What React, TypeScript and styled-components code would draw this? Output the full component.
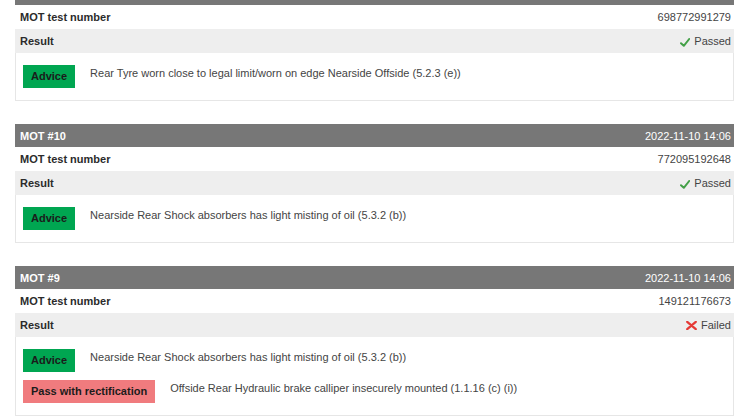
import React from "react";
import styled, { createGlobalStyle } from "styled-components";

const GlobalStyle = createGlobalStyle`
  html, body {
    margin: 0;
    padding: 0;
    background: #ffffff;
  }
  body {
    font-family: "Liberation Sans", Arial, sans-serif;
    font-size: 11px;
    color: #333333;
    overflow: hidden;
  }
`;

type Outcome = "passed" | "failed";
type Kind = "advice" | "rectification";

interface Defect {
  kind: Kind;
  text: string;
}

interface MotTest {
  id: number;
  date: string;
  testNumber: string;
  outcome: Outcome;
  defects: Defect[];
}

const tests: MotTest[] = [
  {
    id: 11,
    date: "2022-11-10 14:06",
    testNumber: "698772991279",
    outcome: "passed",
    defects: [
      {
        kind: "advice",
        text: "Rear Tyre worn close to legal limit/worn on edge Nearside Offside (5.2.3 (e))",
      },
    ],
  },
  {
    id: 10,
    date: "2022-11-10 14:06",
    testNumber: "772095192648",
    outcome: "passed",
    defects: [
      {
        kind: "advice",
        text: "Nearside Rear Shock absorbers has light misting of oil (5.3.2 (b))",
      },
    ],
  },
  {
    id: 9,
    date: "2022-11-10 14:06",
    testNumber: "149121176673",
    outcome: "failed",
    defects: [
      {
        kind: "advice",
        text: "Nearside Rear Shock absorbers has light misting of oil (5.3.2 (b))",
      },
      {
        kind: "rectification",
        text: "Offside Rear Hydraulic brake calliper insecurely mounted (1.1.16 (c) (i))",
      },
    ],
  },
];

/* The list is scrolled a little: the first card's header sits above the fold. */
const Page = styled.main`
  padding: 0 16px 0 15px;
  margin-top: -18px;
  display: flex;
  flex-direction: column;
  gap: 23px;
`;

const Card = styled.section`
  display: flex;
  flex-direction: column;
`;

const CardHeader = styled.header`
  display: flex;
  align-items: center;
  justify-content: space-between;
  height: 23px;
  padding: 0 3px 0 5px;
  background: #777777;
  color: #ffffff;
`;

const Title = styled.span`
  font-weight: bold;
`;

const Row = styled.div<{ $shaded?: boolean }>`
  display: flex;
  align-items: center;
  justify-content: space-between;
  height: 24px;
  padding: 0 3px 0 5px;
  background: ${(p) => (p.$shaded ? "#eeeeee" : "#ffffff")};
`;

const Label = styled.span`
  font-weight: bold;
  color: #2b2b2b;
`;

const Value = styled.span`
  color: #444444;
  display: inline-flex;
  align-items: center;
  gap: 4px;
`;

const Body = styled.div`
  display: flex;
  flex-direction: column;
  gap: 8px;
  padding: 12px 7px;
  border: 1px solid #e6e6e6;
  border-top: none;
`;

const DefectRow = styled.div`
  display: flex;
  align-items: flex-start;
  gap: 15px;
`;

const Badge = styled.span<{ $kind: Kind }>`
  flex: none;
  height: 23px;
  line-height: 23px;
  padding: 0 8px;
  font-weight: bold;
  color: #1b1b1b;
  background: ${(p) => (p.$kind === "advice" ? "#00a651" : "#f07b7e")};
`;

const DefectText = styled.span`
  padding-top: 2px;
  line-height: 13px;
  color: #444444;
`;

const CheckIcon = () => (
  <svg width="10" height="9" viewBox="0 0 10 9" style={{ marginTop: 3 }}>
    <path d="M1 5.2 L3.8 7.8 L9.2 1" fill="none" stroke="#43a047" strokeWidth="2" strokeLinecap="round" strokeLinejoin="round" />
  </svg>
);

const CrossIcon = () => (
  <svg width="11" height="9" viewBox="0 0 11 9">
    <path d="M1.2 0.8 L9.8 8.2 M9.8 0.8 L1.2 8.2" fill="none" stroke="#e53935" strokeWidth="2.2" strokeLinecap="round" />
  </svg>
);

const labels: Record<Kind, string> = {
  advice: "Advice",
  rectification: "Pass with rectification",
};

const TestCard = ({ test }: { test: MotTest }) => (
  <Card>
    <CardHeader>
      <Title>MOT #{test.id}</Title>
      <span>{test.date}</span>
    </CardHeader>
    <Row>
      <Label>MOT test number</Label>
      <Value>{test.testNumber}</Value>
    </Row>
    <Row $shaded>
      <Label>Result</Label>
      <Value>
        {test.outcome === "passed" ? <CheckIcon /> : <CrossIcon />}
        {test.outcome === "passed" ? "Passed" : "Failed"}
      </Value>
    </Row>
    <Body>
      {test.defects.map((d, i) => (
        <DefectRow key={i}>
          <Badge $kind={d.kind}>{labels[d.kind]}</Badge>
          <DefectText>{d.text}</DefectText>
        </DefectRow>
      ))}
    </Body>
  </Card>
);

export default function App() {
  return (
    <>
      <GlobalStyle />
      <Page>
        {tests.map((t) => (
          <TestCard key={t.id} test={t} />
        ))}
      </Page>
    </>
  );
}
